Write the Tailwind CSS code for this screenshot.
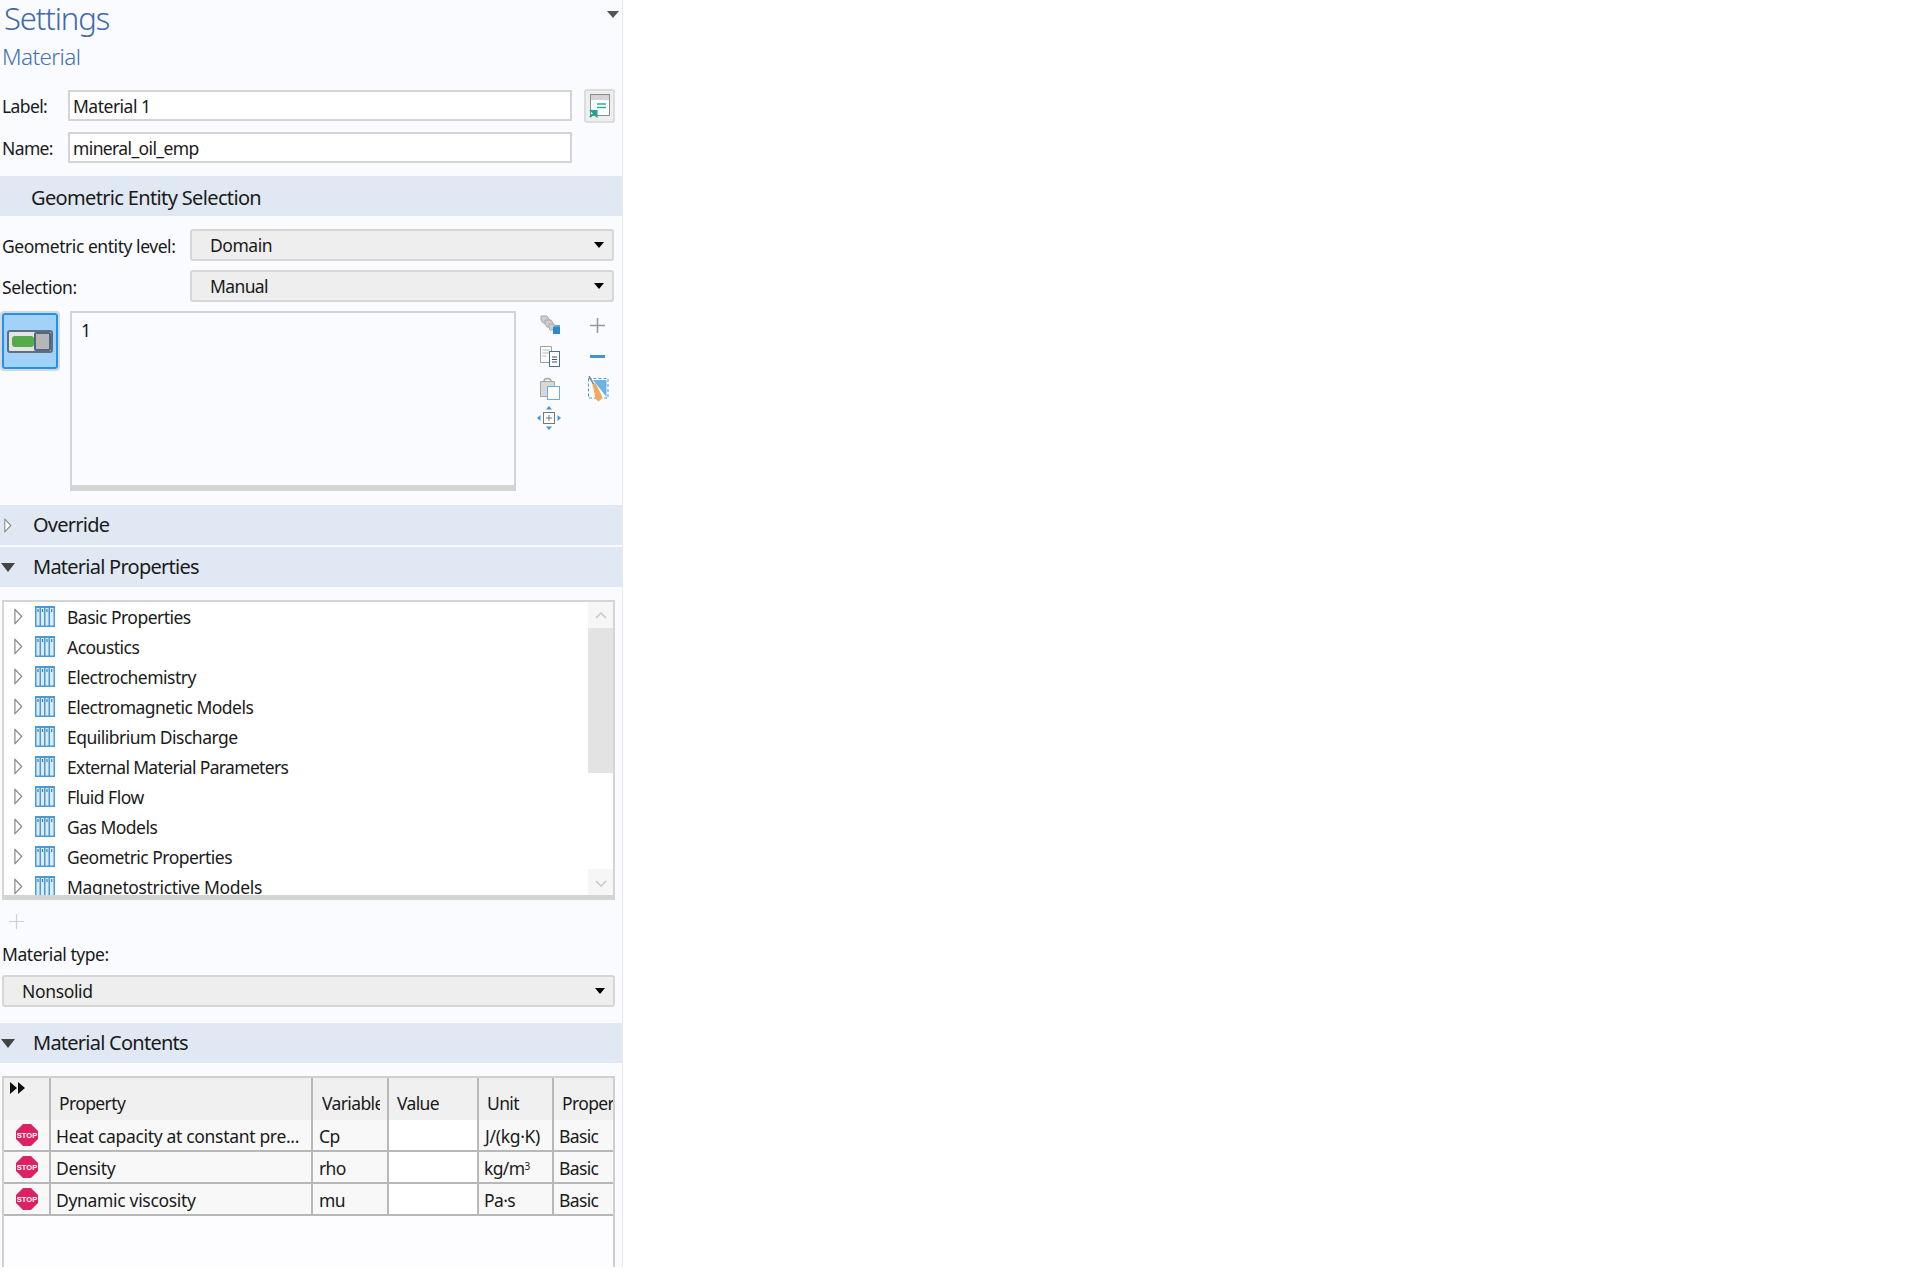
<!DOCTYPE html>
<html lang="en">
<head>
<meta charset="UTF-8">
<title>Settings</title>
<script src="https://cdn.jsdelivr.net/npm/@tailwindcss/browser@4"></script>
</head>
<body class="bg-white font-['Noto_Sans',sans-serif] text-[17.5px] tracking-[-0.62px] text-[#1a1a1a]">
<svg class="hidden">
  <symbol id="tree" viewBox="0 0 20 21">
    <rect x="0" y="0" width="20" height="21" fill="#4a9ad6"/>
    <rect x="1.500" y="2" width="3" height="17.500" fill="#dcebf7"/>
    <rect x="6" y="2" width="3" height="17.500" fill="#dcebf7"/>
    <rect x="10.500" y="2" width="3" height="17.500" fill="#dcebf7"/>
    <rect x="15" y="2" width="3.500" height="17.500" fill="#dcebf7"/>
    <path d="M3 3v3M7.500 3v3M12 3v3M16.700 3v3" stroke="#3b7fb5" stroke-width="1.200"/>
  </symbol>
  <symbol id="stop" viewBox="0 0 22 22">
    <path d="M7 0h8l7 7v8l-7 7H7l-7-7V7z" fill="#db2262"/>
    <text x="11" y="13.800" text-anchor="middle" font-family="Liberation Sans" font-size="7.500" font-weight="700" letter-spacing="0" fill="#fff">STOP</text>
  </symbol>
  <symbol id="closed" viewBox="0 0 10 18"><path d="M1 1l7.500 8L1 17z" fill="#fff" stroke="#8c8c8c" stroke-width="1.400"/></symbol>
</svg>

<div class="w-[623px] h-[1267px] bg-[#f9fbff] border-r border-[#e6e8ec] overflow-hidden">
  <div class="relative h-[73px]">
    <div class="pl-[4px] h-[37px] leading-[37px] text-[31px] font-light text-[#3e6aa8] tracking-[-1.1px]">Settings</div>
    <div class="pl-[2px] mt-[2px] leading-[36px] h-[36px] text-[22.5px] font-light text-[#4272b4] tracking-[-0.6px]">Material</div>
    <div class="absolute right-[3px] top-[11px] w-0 h-0 border-x-[6px] border-x-transparent border-t-[7px] border-t-[#555]"></div>
  </div>

  <div class="flex items-center h-[31px] mt-[17px]">
    <span class="w-[68px] pl-[2px] pt-[2px]">Label:</span>
    <div class="w-[504px] h-[31px] border-2 border-[#d4d4d4] bg-white pl-[3px] leading-[28px] tracking-[-0.5px]">Material 1</div>
    <div class="ml-[12px] w-[31px] h-[34px] -my-[2px] rounded-[3px] border-2 border-[#dcdcdc] bg-[#eeeeee] flex items-center justify-center">
      <svg width="22" height="25" viewBox="0 0 22 25">
        <rect x="1.500" y="1.500" width="19" height="21" fill="#fff" stroke="#8a8a8a"/>
        <rect x="2" y="2" width="18" height="5" fill="#d4d4d4"/>
        <path d="M8 11h9M8 14.500h9" stroke="#2cb09a" stroke-width="1.300"/>
        <path d="M1 24l5-5M2.500 18h5v5z" stroke="#1fa58f" stroke-width="2" fill="#1fa58f"/>
      </svg>
    </div>
  </div>
  <div class="flex items-center h-[31px] mt-[11px]">
    <span class="w-[68px] pl-[2px] pt-[2px]">Name:</span>
    <div class="w-[504px] h-[31px] border-2 border-[#d4d4d4] bg-white pl-[3px] leading-[28px]">mineral_oil_emp</div>
  </div>

  <div class="h-[40px] mt-[13px] bg-[#dfe8f3] pl-[31px] leading-[44px] text-[20px] tracking-[-0.65px]">Geometric Entity Selection</div>

  <div class="flex items-center h-[32px] mt-[13px]">
    <span class="w-[190px] pl-[2px] pt-[2px] tracking-[-0.45px]">Geometric entity level:</span>
    <div class="relative w-[424px] h-[32px] rounded-[3px] border-2 border-[#d6d6d6] bg-[#eeeeee] pl-[18px] leading-[29px] tracking-[-0.45px]">Domain
      <div class="absolute right-[8px] top-[11px] w-0 h-0 border-x-[5px] border-x-transparent border-t-[6px] border-t-black"></div>
    </div>
  </div>
  <div class="flex items-center h-[32px] mt-[9px]">
    <span class="w-[190px] pl-[2px] pt-[2px] tracking-[-0.45px]">Selection:</span>
    <div class="relative w-[424px] h-[32px] rounded-[3px] border-2 border-[#d6d6d6] bg-[#eeeeee] pl-[18px] leading-[29px]">Manual
      <div class="absolute right-[8px] top-[11px] w-0 h-0 border-x-[5px] border-x-transparent border-t-[6px] border-t-black"></div>
    </div>
  </div>

  <div class="flex h-[180px] mt-[9px]">
    <div class="w-[60px] h-[60px] rounded-[4px] border-2 border-[#d8d8d8]">
      <div class="h-full rounded-[3px] border-2 border-[#1c94f0] bg-[#a2d2f8] flex items-center justify-center">
        <svg class="mt-[1px]" width="46" height="24" viewBox="0 0 46 24">
          <rect x="1" y="1" width="44" height="21" rx="2" fill="#e4e4e4" stroke="#5f6d80" stroke-width="2"/>
          <rect x="5" y="6" width="22" height="11" rx="3" fill="#55ab4a"/>
          <rect x="28" y="3" width="15" height="17" rx="1" fill="#b6b6b6" stroke="#54657f" stroke-width="2"/>
        </svg>
      </div>
    </div>
    <div class="ml-[10px] w-[446px] border-2 border-b-[6px] border-[#d4d4d4] pl-[9px] pt-[3px] leading-[28px]">1</div>
    <div class="relative flex-1">
      <svg class="absolute left-[23px] top-[4px]" width="22" height="20" viewBox="0 0 22 20">
        <path d="M2 1h6l2 3v4H4L2 5z" fill="#cfcfcf" stroke="#a8a8a8"/>
        <path d="M6 5h6l2 3v4H8L6 9z" fill="#cfcfcf" stroke="#a8a8a8"/>
        <path d="M10 9h5l1 2v4h-5l-1-3z" fill="#cfcfcf" stroke="#a8a8a8"/>
        <rect x="14" y="12" width="7" height="7" fill="#2f86cb"/>
        <path d="M14 12l2-2h5v2" fill="#5ba7e0"/>
      </svg>
      <svg class="absolute left-[23px] top-[34px]" width="22" height="23" viewBox="0 0 22 23">
        <path d="M1.500 1.500h11v16h-11z" fill="#fff" stroke="#a0a0a0"/>
        <path d="M3.500 5h7M3.500 8h7M3.500 11h4" stroke="#b5b5b5"/>
        <rect x="10.500" y="6.500" width="10" height="15" fill="#fff" stroke="#4f6d92"/>
        <path d="M13 12h5M13 14.500h5M13 17h5" stroke="#34507a"/>
      </svg>
      <svg class="absolute left-[23px] top-[66px]" width="22" height="23" viewBox="0 0 22 23">
        <path d="M1.500 4.500h14v15h-14z" fill="#d8d8d8" stroke="#a4a4a4"/>
        <path d="M5 4.500c0-4 7-4 7 0" fill="none" stroke="#a4a4a4" stroke-width="1.400"/>
        <rect x="8.500" y="9.500" width="12" height="13" fill="#fff" stroke="#6aaedd"/>
      </svg>
      <svg class="absolute left-[21px] top-[95px]" width="24" height="24" viewBox="0 0 24 24">
        <rect x="6.500" y="6.500" width="11" height="11" fill="#fff" stroke="#777"/>
        <path d="M9 12h6M12 9v6" stroke="#777"/>
        <path d="M12 0l3 3.500H9zM12 24l3-3.500H9zM0 12l3.500-3v6zM24 12l-3.500-3v6z" fill="#3f97d9"/>
      </svg>
      <svg class="absolute left-[74px] top-[7px]" width="15" height="15" viewBox="0 0 15 15">
        <path d="M7.500 0v15M0 7.500h15" stroke="#999" stroke-width="1.600"/>
      </svg>
      <svg class="absolute left-[74px] top-[44px]" width="15" height="3" viewBox="0 0 15 3">
        <rect width="15" height="3" fill="#3f94d6"/>
      </svg>
      <svg class="absolute left-[72px] top-[65px]" width="21" height="26" viewBox="0 0 21 26">
        <rect x="0.500" y="2.500" width="19.500" height="19.500" fill="none" stroke="#4b9ad8" stroke-dasharray="3 2"/>
        <path d="M5 4h13.500v17z" fill="#6cb3e6"/>
        <path d="M1 0l5 9" stroke="#8c8c8c" stroke-width="1.600"/>
        <path d="M4.500 8.500l3-1.500 6 12 1 3-4 3.500-3-2.500-1.500-8z" fill="#f2ab5e"/>
      </svg>
    </div>
  </div>

  <div class="flex items-center h-[40px] mt-[14px] bg-[#dfe8f3] text-[20px] tracking-[-0.75px]">
    <svg class="ml-[4px] w-[8px] h-[15px]" viewBox="0 0 10 18"><use href="#closed"/></svg>
    <span class="ml-[21px]">Override</span>
  </div>
  <div class="flex items-center h-[40px] mt-[2px] bg-[#dfe8f3] text-[20px] tracking-[-0.75px]">
    <div class="ml-[1px] w-0 h-0 border-x-[7px] border-x-transparent border-t-[9px] border-t-[#444]"></div>
    <span class="ml-[18px]">Material Properties</span>
  </div>

  <div class="relative mt-[13px] ml-[2px] w-[613px] h-[300px] border-2 border-b-[5px] border-[#d4d4d4] bg-white overflow-hidden">
    <div class="h-[293px] overflow-hidden tracking-[-0.52px]">
      <div class="flex items-center h-[30px]"><svg class="ml-[10px] -mt-[2px] w-[9px] h-[17px]" viewBox="0 0 10 18"><use href="#closed"/></svg><svg class="ml-[12px] w-[20px] h-[21px] -mt-[1px]"><use href="#tree"/></svg><span class="ml-[12px]">Basic Properties</span></div>
      <div class="flex items-center h-[30px]"><svg class="ml-[10px] -mt-[2px] w-[9px] h-[17px]" viewBox="0 0 10 18"><use href="#closed"/></svg><svg class="ml-[12px] w-[20px] h-[21px] -mt-[1px]"><use href="#tree"/></svg><span class="ml-[12px]">Acoustics</span></div>
      <div class="flex items-center h-[30px]"><svg class="ml-[10px] -mt-[2px] w-[9px] h-[17px]" viewBox="0 0 10 18"><use href="#closed"/></svg><svg class="ml-[12px] w-[20px] h-[21px] -mt-[1px]"><use href="#tree"/></svg><span class="ml-[12px]">Electrochemistry</span></div>
      <div class="flex items-center h-[30px]"><svg class="ml-[10px] -mt-[2px] w-[9px] h-[17px]" viewBox="0 0 10 18"><use href="#closed"/></svg><svg class="ml-[12px] w-[20px] h-[21px] -mt-[1px]"><use href="#tree"/></svg><span class="ml-[12px]">Electromagnetic Models</span></div>
      <div class="flex items-center h-[30px]"><svg class="ml-[10px] -mt-[2px] w-[9px] h-[17px]" viewBox="0 0 10 18"><use href="#closed"/></svg><svg class="ml-[12px] w-[20px] h-[21px] -mt-[1px]"><use href="#tree"/></svg><span class="ml-[12px]">Equilibrium Discharge</span></div>
      <div class="flex items-center h-[30px]"><svg class="ml-[10px] -mt-[2px] w-[9px] h-[17px]" viewBox="0 0 10 18"><use href="#closed"/></svg><svg class="ml-[12px] w-[20px] h-[21px] -mt-[1px]"><use href="#tree"/></svg><span class="ml-[12px] tracking-[-0.66px]">External Material Parameters</span></div>
      <div class="flex items-center h-[30px]"><svg class="ml-[10px] -mt-[2px] w-[9px] h-[17px]" viewBox="0 0 10 18"><use href="#closed"/></svg><svg class="ml-[12px] w-[20px] h-[21px] -mt-[1px]"><use href="#tree"/></svg><span class="ml-[12px]">Fluid Flow</span></div>
      <div class="flex items-center h-[30px]"><svg class="ml-[10px] -mt-[2px] w-[9px] h-[17px]" viewBox="0 0 10 18"><use href="#closed"/></svg><svg class="ml-[12px] w-[20px] h-[21px] -mt-[1px]"><use href="#tree"/></svg><span class="ml-[12px]">Gas Models</span></div>
      <div class="flex items-center h-[30px]"><svg class="ml-[10px] -mt-[2px] w-[9px] h-[17px]" viewBox="0 0 10 18"><use href="#closed"/></svg><svg class="ml-[12px] w-[20px] h-[21px] -mt-[1px]"><use href="#tree"/></svg><span class="ml-[12px]">Geometric Properties</span></div>
      <div class="flex items-center h-[30px]"><svg class="ml-[10px] -mt-[2px] w-[9px] h-[17px]" viewBox="0 0 10 18"><use href="#closed"/></svg><svg class="ml-[12px] w-[20px] h-[21px] -mt-[1px]"><use href="#tree"/></svg><span class="ml-[12px] tracking-[-0.35px]">Magnetostrictive Models</span></div>
    </div>
    <div class="absolute right-0 top-0 bottom-0 w-[25px] bg-white flex flex-col">
      <div class="h-[26px] bg-[#f6f6f6] flex items-center justify-center">
        <svg width="12" height="8" viewBox="0 0 12 8"><path d="M1 7l5-5 5 5" fill="none" stroke="#c8c8c8" stroke-width="1.500"/></svg>
      </div>
      <div class="h-[145px] bg-[#e3e3e3]"></div>
      <div class="flex-1"></div>
      <div class="h-[26px] bg-[#f6f6f6] flex items-center justify-center">
        <svg class="mt-[3px]" width="12" height="8" viewBox="0 0 12 8"><path d="M1 1l5 5 5-5" fill="none" stroke="#c8c8c8" stroke-width="1.500"/></svg>
      </div>
    </div>
  </div>

  <svg class="ml-[9px] mt-[14px]" width="15" height="15" viewBox="0 0 15 15"><path d="M7.500 0v15M0 7.500h15" stroke="#cfcfcf" stroke-width="1.200"/></svg>
  <div class="pl-[2px] mt-[10px] h-[30px] leading-[30px] tracking-[-0.45px]">Material type:</div>
  <div class="relative mt-[6px] ml-[2px] w-[613px] h-[32px] rounded-[3px] border-2 border-[#d6d6d6] bg-[#eeeeee] pl-[18px] leading-[29px] tracking-[-0.35px]">Nonsolid
    <div class="absolute right-[8px] top-[11px] w-0 h-0 border-x-[5px] border-x-transparent border-t-[6px] border-t-black"></div>
  </div>

  <div class="flex items-center h-[40px] mt-[16px] bg-[#dfe8f3] text-[20px] tracking-[-0.75px]">
    <div class="ml-[1px] w-0 h-0 border-x-[7px] border-x-transparent border-t-[9px] border-t-[#444]"></div>
    <span class="ml-[18px]">Material Contents</span>
  </div>

  <div class="mt-[13px] ml-[2px] w-[613px] h-[191px] border-x-2 border-t-2 border-[#cfcfcf] bg-[#fdfdff]">
    <div class="grid grid-cols-[47px_262px_76px_90px_75px_59px] grid-rows-[42px_32px_32px_32px]">
      <div class="bg-[#f0f0f0] border-r-2 border-[#b8b8b8] pl-[6px] pt-[4px]">
        <svg width="16" height="12" viewBox="0 0 16 12"><path d="M0 0l7 6-7 6zM8 0l7 6-7 6z" fill="#111"/></svg>
      </div>
      <div class="bg-[#f0f0f0] border-r-2 border-[#b8b8b8] pl-[8px] pt-[11px] leading-[28px]">Property</div>
      <div class="bg-[#f0f0f0] border-r-2 border-[#b8b8b8] pl-[9px] pt-[11px] leading-[28px]"><div class="w-[58px] overflow-hidden whitespace-nowrap">Variable</div></div>
      <div class="bg-[#f0f0f0] border-r-2 border-[#b8b8b8] pl-[8px] pt-[11px] leading-[28px]">Value</div>
      <div class="bg-[#f0f0f0] border-r-2 border-[#b8b8b8] pl-[8px] pt-[11px] leading-[28px]">Unit</div>
      <div class="bg-[#f0f0f0] pl-[8px] pt-[11px] leading-[28px] overflow-hidden whitespace-nowrap">Properties</div>

      <div class="bg-[#f8f8f8] border-r-2 border-b-2 border-[#b8b8b8] flex items-center justify-center"><svg class="w-[22px] h-[22px]"><use href="#stop"/></svg></div>
      <div class="bg-[#f8f8f8] border-r-2 border-b-2 border-[#b8b8b8] pl-[5px] leading-[32px] whitespace-nowrap tracking-[-0.32px]">Heat capacity at constant pre...</div>
      <div class="bg-[#f8f8f8] border-r-2 border-b-2 border-[#b8b8b8] pl-[6px] leading-[32px]">Cp</div>
      <div class="bg-white border-r-2 border-b-2 border-[#b8b8b8]"></div>
      <div class="bg-[#f8f8f8] border-r-2 border-b-2 border-[#b8b8b8] pl-[6px] leading-[32px] whitespace-nowrap tracking-[-0.3px]">J/(kg·K)</div>
      <div class="bg-[#f8f8f8] border-b-2 border-[#b8b8b8] pl-[5px] leading-[32px]">Basic</div>

      <div class="bg-[#f8f8f8] border-r-2 border-b-2 border-[#b8b8b8] flex items-center justify-center"><svg class="w-[22px] h-[22px]"><use href="#stop"/></svg></div>
      <div class="bg-[#f8f8f8] border-r-2 border-b-2 border-[#b8b8b8] pl-[5px] leading-[32px] tracking-[-0.32px]">Density</div>
      <div class="bg-[#f8f8f8] border-r-2 border-b-2 border-[#b8b8b8] pl-[6px] leading-[32px]">rho</div>
      <div class="bg-white border-r-2 border-b-2 border-[#b8b8b8]"></div>
      <div class="bg-[#f8f8f8] border-r-2 border-b-2 border-[#b8b8b8] pl-[5px] leading-[32px]">kg/m<sup class="text-[10px] leading-none">3</sup></div>
      <div class="bg-[#f8f8f8] border-b-2 border-[#b8b8b8] pl-[5px] leading-[32px]">Basic</div>

      <div class="bg-[#f8f8f8] border-r-2 border-b-2 border-[#b8b8b8] flex items-center justify-center"><svg class="w-[22px] h-[22px]"><use href="#stop"/></svg></div>
      <div class="bg-[#f8f8f8] border-r-2 border-b-2 border-[#b8b8b8] pl-[5px] leading-[32px] tracking-[-0.32px]">Dynamic viscosity</div>
      <div class="bg-[#f8f8f8] border-r-2 border-b-2 border-[#b8b8b8] pl-[6px] leading-[32px]">mu</div>
      <div class="bg-white border-r-2 border-b-2 border-[#b8b8b8]"></div>
      <div class="bg-[#f8f8f8] border-r-2 border-b-2 border-[#b8b8b8] pl-[5px] leading-[32px]">Pa·s</div>
      <div class="bg-[#f8f8f8] border-b-2 border-[#b8b8b8] pl-[5px] leading-[32px]">Basic</div>
    </div>
  </div>
</div>
</body>
</html>
